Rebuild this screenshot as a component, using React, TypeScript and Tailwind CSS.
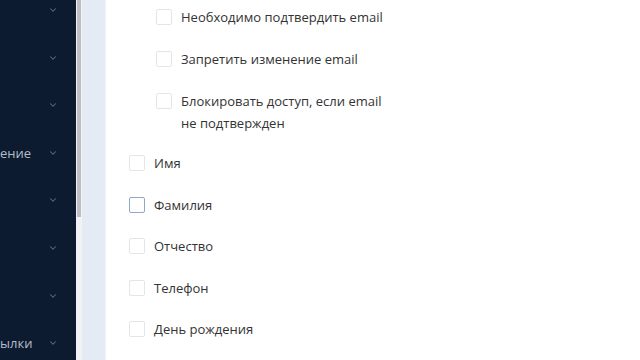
import { ChevronDown } from 'lucide-react';

const navItems = ['', '', '', 'ение', '', '', '', 'ылки'];

function Box({ active }: { active?: boolean }) {
  return (
    <span
      className={
        'block w-[16px] h-[16px] shrink-0 rounded-[2px] border bg-white ' +
        (active ? 'border-[#8fa9c4]' : 'border-[#e3e5e8]')
      }
    />
  );
}

function Check({ label, active, nested }: { label: React.ReactNode; active?: boolean; nested?: boolean }) {
  return (
    <div className={'flex items-start gap-[9px] ' + (nested ? 'pl-[27px]' : '')}>
      <span className="pt-[3px]">
        <Box active={active} />
      </span>
      <span className="text-[13px] leading-[22px] text-[#333333]">{label}</span>
    </div>
  );
}

export default function App() {
  return (
    <div className="flex w-[640px] h-[360px] overflow-hidden bg-white" style={{ fontFamily: '"Open Sans", sans-serif' }}>
      {/* sidebar */}
      <div className="w-[76px] h-full shrink-0 bg-[#0c1b30] flex flex-col pt-[1px]">
        {navItems.map((t, i) => (
          <div key={i} className="h-[47.6px] shrink-0 flex items-start justify-between pr-[18px]">
            <span className="text-[13px] leading-[18px] font-medium text-[#b4bdca] mt-[0px]">{t}</span>
            <ChevronDown className="w-[10px] h-[10px] text-[#5d6c84] mt-[4px]" strokeWidth={2.5} />
          </div>
        ))}
      </div>

      {/* scrollbar */}
      <div className="w-[6px] h-full shrink-0 bg-[#f1f2f4] px-[1px]">
        <div className="h-[217px] w-[4px] bg-[#bdbfc4]" />
      </div>

      {/* gutter */}
      <div className="w-[24px] h-full shrink-0 bg-[#e4ebf4] border-r border-[#eef1f5]" />

      {/* content */}
      <div className="flex-1 pl-[23px] pt-[6px] flex flex-col gap-[20px]">
        <Check nested label="Необходимо подтвердить email" />
        <Check nested label="Запретить изменение email" />
        <Check
          nested
          label={
            <>
              Блокировать доступ, если email
              <br />
              не подтвержден
            </>
          }
        />
        <div className="flex flex-col gap-[19.5px] mt-[-2px]">
          <Check label="Имя" />
          <Check label="Фамилия" active />
          <Check label="Отчество" />
          <Check label="Телефон" />
          <Check label="День рождения" />
        </div>
      </div>
    </div>
  );
}
